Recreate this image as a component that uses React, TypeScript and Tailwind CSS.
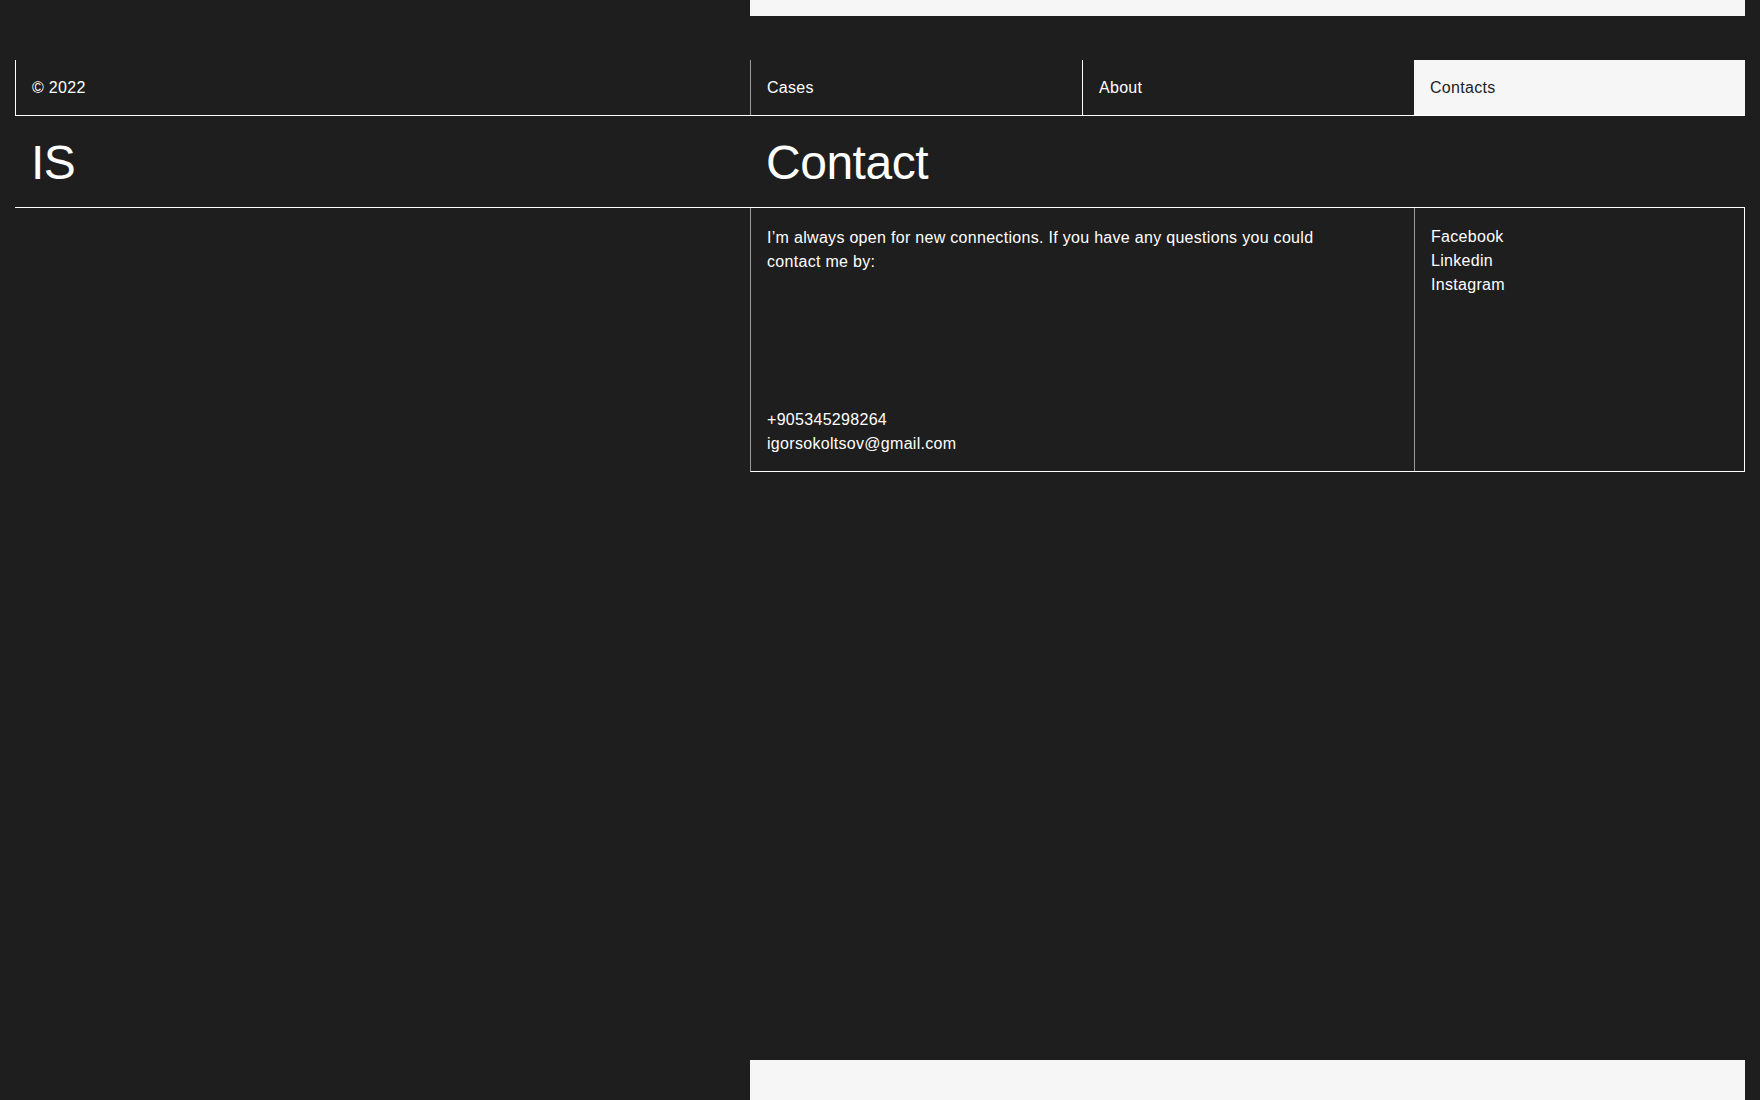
const navItems = [
  { label: 'Cases', active: false, edge: 'border-[#9a9a9a]' },
  { label: 'About', active: false, edge: 'border-white' },
  { label: 'Contacts', active: true, edge: 'border-white' },
]

const socials = ['Facebook', 'Linkedin', 'Instagram']

export default function App() {
  return (
    <div
      className="flex h-[1100px] flex-col overflow-hidden bg-[#1e1e1e] px-[15px] text-white"
      style={{ fontFamily: '"Liberation Sans", Arial, sans-serif' }}
    >
      <div className="flex">
        <div className="w-[735px]" />
        <div className="h-4 flex-1 bg-[#f6f6f6]" />
      </div>

      {/* header */}
      <div className="mt-[44px] flex h-[56px] border-b border-white text-[16px] leading-6 tracking-[0.3px]">
        <div className="flex w-[735px] items-center border-l border-white pl-4">© 2022</div>
        <div className="flex flex-1">
          {navItems.map((item) => (
            <div
              key={item.label}
              className={
                item.active
                  ? 'flex flex-1 items-center bg-[#f6f6f6] pl-4 text-[#1e1e1e]'
                  : `flex flex-1 items-center border-l pl-4 ${item.edge}`
              }
            >
              {item.label}
            </div>
          ))}
        </div>
      </div>

      {/* title */}
      <div className="flex h-[92px] border-b border-white pt-[23px] text-[48px] leading-[48px] tracking-[-0.01em]">
        <div className="w-[735px] pl-4">IS</div>
        <div className="flex-1 pl-4">Contact</div>
      </div>

      {/* content */}
      <div className="flex">
        <div className="w-[735px]" />
        <div className="flex h-[264px] flex-1 border-x border-b border-l-[#9a9a9a] border-r-white border-b-white text-[16px] leading-6 tracking-[0.3px]">
          <div className="flex w-[663px] flex-col justify-between px-4 pt-[18px] pb-[15px]">
            <p className="max-w-[590px]">
              I’m always open for new connections. If you have any questions you could contact me by:
            </p>
            <div>
              <p>+905345298264</p>
              <p>igorsokoltsov@gmail.com</p>
            </div>
          </div>
          <div className="flex flex-1 flex-col border-l border-[#9a9a9a] px-4 pt-[17px]">
            {socials.map((s) => (
              <a key={s} href="#" className="block">
                {s}
              </a>
            ))}
          </div>
        </div>
      </div>

      <div className="flex-1" />

      <div className="flex">
        <div className="w-[735px]" />
        <div className="h-[40px] flex-1 bg-[#f6f6f6]" />
      </div>
    </div>
  )
}
